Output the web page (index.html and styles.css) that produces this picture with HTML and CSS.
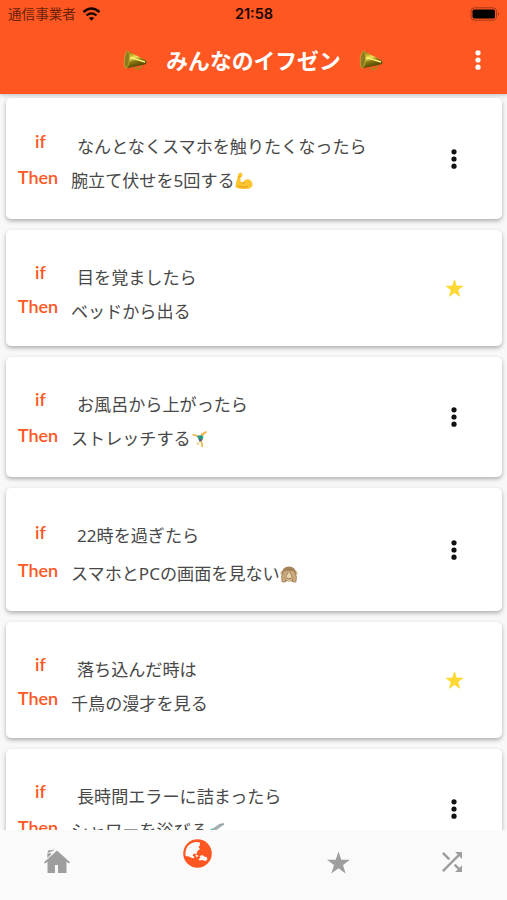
FILE: index.html
```html
<!DOCTYPE html>
<html lang="ja">
<head>
    <meta charset="UTF-8">
    <meta name="viewport" content="width=device-width, initial-scale=1">
    <title>みんなのイフゼン</title>
    <link rel="stylesheet" href="styles.css">
</head>
<body>
    <svg class="defs" aria-hidden="true">
        <defs>
            <linearGradient id="gold" x1="0" y1="0" x2="0.35" y2="1">
                <stop offset="0" stop-color="#6b5c08"/>
                <stop offset="0.3" stop-color="#c9b62a"/>
                <stop offset="0.45" stop-color="#f0e35c"/>
                <stop offset="0.65" stop-color="#8a7a10"/>
                <stop offset="1" stop-color="#4a4004"/>
            </linearGradient>
            <symbol id="horn" viewBox="0 0 26 22">
                <path d="M12 17q1 4 4 3q3-1 3-4" fill="none" stroke="#a08a1a" stroke-width="1.5"/>
                <path d="M5 1L24 11q1.500 2-.5 4L4 19z" fill="url(#gold)"/>
                <ellipse cx="4" cy="10" rx="2.600" ry="9" transform="rotate(6 4 10)" fill="#8d7a20" stroke="#c4ad35" stroke-width=".8"/>
                <path d="M8 8l15 4.500" stroke="#fff27a" stroke-width="1.600"/>
            </symbol>
            <symbol id="dots" viewBox="0 0 6 20">
                <circle cx="3" cy="2.800" r="2.600"/>
                <circle cx="3" cy="10" r="2.600"/>
                <circle cx="3" cy="17.200" r="2.600"/>
            </symbol>
            <symbol id="star" viewBox="0 0 24 24">
                <path d="M12 0l2.900 8.600H24l-7.300 5.500L19.400 23 12 17.600 4.600 23l2.700-8.900L0 8.600h9.100z"/>
            </symbol>
        </defs>
    </svg>

    <header class="app-bar">
        <div class="status">
            <div class="carrier">
                <span>通信事業者</span>
                <svg class="wifi" viewBox="0 0 18 14">
                    <path d="M1 5q8-7 16 0" fill="none" stroke="#180500" stroke-width="2.600"/>
                    <path d="M4 8.500q5-4.300 10 0" fill="none" stroke="#180500" stroke-width="2.300"/>
                    <path d="M6.400 11q2.600-2.200 5.200 0L9 13.800z" fill="#180500"/>
                </svg>
            </div>
            <span class="clock">21:58</span>
            <svg class="battery" viewBox="0 0 30 14">
                <rect x="1" y=".8" width="25.500" height="12.400" rx="3.500" fill="none" stroke="#a53715"/>
                <rect x="2.500" y="2.500" width="22.500" height="9" rx="1.800" fill="#000"/>
                <path d="M28 5q2 2 0 4z" fill="#a53715"/>
            </svg>
        </div>
        <div class="toolbar">
            <svg class="horn"><use href="#horn"/></svg>
            <h1>みんなのイフゼン</h1>
            <svg class="horn"><use href="#horn"/></svg>
            <button class="menu" aria-label="メニュー"><svg class="dots"><use href="#dots"/></svg></button>
        </div>
    </header>

    <main>
        <article class="card with-emoji">
            <div class="labels"><span class="label-if">if</span><span>Then</span></div>
            <div class="texts">
                <p class="if">なんとなくスマホを触りたくなったら</p>
                <p>腕立て伏せを5回する<svg class="emoji" viewBox="0 0 18 18"><path d="M3.500 1.500Q6 0 7.500 2L7 5 5.500 5 5.600 9.500Q7 11 8.300 9.800 9.500 7 13 7.300 17.500 8 17.500 13 17 16.500 12 17 5 17.500 1 15.500 0 14.500 1 11z" fill="#fcc52e"/><path d="M5.500 5H3M6 10.500Q8 12 9.500 10.500M3 14q5 2 10 .5" fill="none" stroke="#e29b18" stroke-width=".9"/></svg></p>
            </div>
            <svg class="dots"><use href="#dots"/></svg>
        </article>

        <article class="card plain">
            <div class="labels"><span class="label-if">if</span><span>Then</span></div>
            <div class="texts">
                <p class="if">目を覚ましたら</p>
                <p>ベッドから出る</p>
            </div>
            <svg class="star"><use href="#star"/></svg>
        </article>

        <article class="card with-emoji short">
            <div class="labels"><span class="label-if">if</span><span>Then</span></div>
            <div class="texts">
                <p class="if">お風呂から上がったら</p>
                <p>ストレッチする<svg class="emoji" viewBox="0 0 18 18"><path d="M8 6.500L1.500 4.500M11 6l4-4.500" fill="none" stroke="#e8b04a" stroke-width="1.500"/><path d="M6 6l4.500-1 2 2-1.500 4-3-.5z" fill="#269a83"/><path d="M8 9l3 0-.5 3-2 0z" fill="#6c5686"/><path d="M10 11l1 3 .2 3M10 4.500L15.500 2" fill="none" stroke="#edb950" stroke-width="1.800"/><circle cx="7" cy="13.500" r="1.500" fill="#eedb9c"/></svg></p>
            </div>
            <svg class="dots"><use href="#dots"/></svg>
        </article>

        <article class="card mixed">
            <div class="labels"><span class="label-if">if</span><span>Then</span></div>
            <div class="texts">
                <p class="if">22時を過ぎたら</p>
                <p>スマホとPCの画面を見ない<svg class="emoji" viewBox="0 0 18 18"><circle cx="2.500" cy="8" r="2.200" fill="#d8bd92"/><circle cx="15.500" cy="8" r="2.200" fill="#d8bd92"/><path d="M2 9Q2 1.500 9 1.500T16 9L15 15Q9 18 3 15z" fill="#a5845c"/><ellipse cx="9" cy="11" rx="4.500" ry="5" fill="#ead5ae"/><path d="M2 17L1.500 12 3.500 6 7 5 8.500 7 6.500 10.500 5.500 17zM16 17l.5-5-2-6L11 5 9.500 7l2 3.500 1 6.500z" fill="#caa87a" stroke="#8e6e4a" stroke-width=".6"/><path d="M7 13.500q2 1 4 0" fill="none" stroke="#604329" stroke-width=".8"/></svg></p>
            </div>
            <svg class="dots"><use href="#dots"/></svg>
        </article>

        <article class="card plain">
            <div class="labels"><span class="label-if">if</span><span>Then</span></div>
            <div class="texts">
                <p class="if">落ち込んだ時は</p>
                <p>千鳥の漫才を見る</p>
            </div>
            <svg class="star"><use href="#star"/></svg>
        </article>

        <article class="card with-emoji short">
            <div class="labels"><span class="label-if">if</span><span>Then</span></div>
            <div class="texts">
                <p class="if">長時間エラーに詰まったら</p>
                <p>シャワーを浴びる<svg class="emoji" viewBox="0 0 18 18"><path d="M4 7L12 1.500 14 4 6 10z" fill="#a5afb2"/><path d="M3 7l4 4" stroke="#45c9ae" stroke-width="2"/><path d="M12 3l4-1" stroke="#98a3a8" stroke-width="2"/></svg></p>
            </div>
            <svg class="dots"><use href="#dots"/></svg>
        </article>
    </main>

    <nav class="tabs">
        <a class="tab home"><svg viewBox="0 0 26 26"><path d="M13 2.500L0 14.200l1 1.300 2.500-1.800V25H11v-8h3v8h8.500V13.700l2.500 1.800 1-1.300z"/><path d="M3.300 10V5.500L7 5v1.500z"/><path d="M3.500 4.500Q4 1.500 7 2.200T10.500 0Q10.500 3 7.500 3.500T4 5z"/></svg></a>
        <a class="tab world"><svg viewBox="0 0 29 29"><circle cx="14.500" cy="14.500" r="14.300"/><path d="M2.500 13Q3.500 6.500 8.500 4.200 12.500 2.300 17 3.500L17 6l-1.500 2 1.500 2-2.500 2-1 3-2.500-.5-1.500 2 2 1.500-1.500 1.500-4-2-3.500-.5z" fill="#fafafa"/><path d="M16.500 17l3-1 1.500 1.500 2.500.5 1 2.500-2 1.500-3.500-1-2.500.5-1-1.500 2-1z" fill="#fafafa"/><path d="M12.500 15.500l2 .5.500 1.500-2 .5z" fill="#fafafa"/></svg></a>
        <a class="tab favorite"><svg viewBox="0 0 24 24"><use href="#star"/></svg></a>
        <a class="tab shuffle"><svg viewBox="4 4 16 16"><path d="M10.590 9.170L5.410 4 4 5.410l5.170 5.170 1.420-1.410zM14.500 4l2.040 2.040L4 18.590 5.410 20 17.960 7.460 20 9.500V4h-5.500zm.33 9.410l-1.410 1.410 3.130 3.130L14.500 20H20v-5.500l-2.040 2.040-3.130-3.130z"/></svg></a>
    </nav>
</body>
</html>
```

FILE: styles.css
```css
* {
    box-sizing: border-box;
}

body {
    margin: 0;
    height: 900px;
    display: flex;
    flex-direction: column;
    overflow: hidden;
    background: #f8f8f8;
    color: #484848;
    font-family: "Noto Sans", "Noto Sans CJK JP", sans-serif;
}

.defs {
    position: absolute;
    width: 0;
    height: 0;
}

/* ヘッダー */
.app-bar {
    flex: none;
    height: 94px;
    background: #ff5722;
    box-shadow: 0 1px 4px rgba(0, 0, 0, 0.25);
}

.status {
    display: grid;
    grid-template-columns: 1fr auto 1fr;
    align-items: center;
    height: 27px;
    padding: 0 7px 0 8px;
    color: #180500;
}

.carrier {
    display: flex;
    align-items: center;
    gap: 6px;
    font-size: 13.6px;
    line-height: 27px;
    color: #6a210b;
}

.wifi {
    width: 19px;
    height: 14px;
}

.clock {
    font: 600 14.5px/27px Inter, sans-serif;
}

.battery {
    justify-self: end;
    width: 30px;
    height: 14px;
}

.toolbar {
    position: relative;
    display: flex;
    justify-content: center;
    align-items: center;
    gap: 18px;
    height: 67px;
}

h1 {
    margin: 0;
    color: #fff;
    font-size: 21.8px;
    line-height: 30px;
    font-weight: 700;
}

.horn {
    width: 25px;
    height: 21px;
}

.menu {
    position: absolute;
    top: 23px;
    right: 26px;
    display: flex;
    padding: 0;
    border: none;
    background: none;
    fill: #fff;
}

.dots {
    width: 6px;
    height: 20px;
}

/* カード一覧 */
main {
    flex: 1;
    min-height: 0;
    overflow: hidden;
    display: flex;
    flex-direction: column;
    gap: 11px;
    padding: 4px 5px 0 6px;
}

.card {
    flex: none;
    display: flex;
    align-items: flex-start;
    height: 121px;
    padding-right: 45px;
    border-radius: 5px;
    background: #fff;
    box-shadow: 0 2px 4px rgba(0, 0, 0, 0.3);
}

.card > svg {
    flex: none;
    align-self: center;
    margin-left: auto;
}

.card .dots {
    fill: #111;
}

.card .star {
    width: 17px;
    height: 17px;
    margin-right: -6px;
    fill: #fdd835;
    stroke: #fdd835;
    stroke-linejoin: round;
}

.labels {
    flex: none;
    display: flex;
    flex-direction: column;
    align-items: center;
    gap: 12px;
    width: 64px;
    padding-top: 31px;
    color: #ff5722;
    font: 600 18px/24px Lato, sans-serif;
}

.label-if {
    padding-left: 5px;
}

.texts {
    display: flex;
    flex-direction: column;
    gap: 10px;
    padding: 37px 0 0 1px;
}

.texts p {
    margin: 0;
    font-size: 17.1px;
    line-height: 24px;
    white-space: nowrap;
}

.texts .if {
    padding-left: 6px;
}

.emoji {
    width: 18px;
    height: 18px;
    vertical-align: -3px;
}

.short {
    height: 120px;
}

.short .labels {
    padding-top: 30px;
}

.short .texts {
    padding-top: 36px;
}

.plain {
    height: 116px;
}

.plain .labels {
    gap: 10px;
    padding-top: 30px;
}

.plain .texts {
    padding-top: 36px;
}

.mixed {
    height: 123px;
}

.mixed .labels {
    gap: 14px;
    padding-top: 32px;
}

.mixed .texts {
    gap: 14px;
    padding-top: 36px;
}

/* 下のタブ */
.tabs {
    position: relative;
    flex: none;
    display: grid;
    grid-template-columns: 114px 166px 116px 111px;
    align-items: start;
    height: 70px;
    background: #fafafa;
    fill: #9e9e9e;
}

.tab {
    display: flex;
    justify-content: center;
}

.home svg {
    width: 26px;
    height: 26px;
    margin-top: 18px;
}

.world svg {
    width: 29px;
    height: 29px;
    margin-top: 9px;
    fill: #ff5722;
}

.favorite svg {
    width: 23px;
    height: 24px;
    margin-top: 21px;
}

.shuffle svg {
    width: 20px;
    height: 20px;
    margin-top: 22px;
}
```
